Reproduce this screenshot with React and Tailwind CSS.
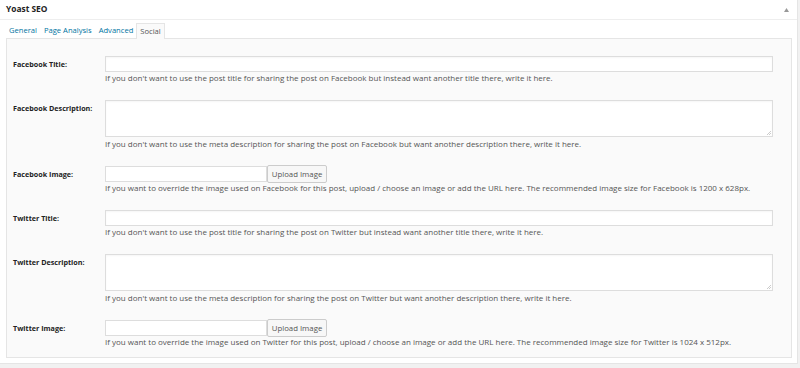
import React from "react";

const font = { fontFamily: "'Open Sans', 'Liberation Sans', sans-serif" };

function Field({ label, help, kind }) {
  return (
    <div className="flex mb-[16px] last:mb-0">
      <div className="w-[92px] shrink-0 text-[7.2px] font-bold leading-[16px] text-[#222]">{label}</div>
      <div className="flex-1">
        {kind === "text" && (
          <div className="h-[16px] w-[668px] border border-[#ddd] bg-white shadow-[inset_0_1px_2px_rgba(0,0,0,0.04)]"></div>
        )}
        {kind === "area" && (
          <div className="relative h-[37px] w-[668px] border border-[#ddd] bg-white shadow-[inset_0_1px_2px_rgba(0,0,0,0.04)]">
            <svg className="absolute right-[1px] bottom-[1px]" width="5" height="5" viewBox="0 0 5 5">
              <path d="M1 5 L5 1 M3 5 L5 3" stroke="#aaa" strokeWidth="0.6" />
            </svg>
          </div>
        )}
        {kind === "image" && (
          <div className="flex h-[16px]">
            <div className="h-[16px] w-[162px] border border-[#ddd] bg-white"></div>
            <button className="-mt-[1px] h-[18px] w-[60px] rounded-[2px] border border-[#ccc] bg-[#f7f7f7] text-[7.8px] leading-[16px] text-[#555]">
              Upload Image
            </button>
          </div>
        )}
        <div className={`text-[8px] leading-[12px] text-[#555] ${kind === "area" ? "mt-[1px]" : ""}`}>{help}</div>
      </div>
    </div>
  );
}

export default function App() {
  const fields = [
    { label: "Facebook Title:", kind: "text", help: "If you don't want to use the post title for sharing the post on Facebook but instead want another title there, write it here." },
    { label: "Facebook Description:", kind: "area", help: "If you don't want to use the meta description for sharing the post on Facebook but want another description there, write it here." },
    { label: "Facebook Image:", kind: "image", help: "If you want to override the image used on Facebook for this post, upload / choose an image or add the URL here. The recommended image size for Facebook is 1200 x 628px." },
    { label: "Twitter Title:", kind: "text", help: "If you don't want to use the post title for sharing the post on Twitter but instead want another title there, write it here." },
    { label: "Twitter Description:", kind: "area", help: "If you don't want to use the meta description for sharing the post on Twitter but want another description there, write it here." },
    { label: "Twitter Image:", kind: "image", help: "If you want to override the image used on Twitter for this post, upload / choose an image or add the URL here. The recommended image size for Twitter is 1024 x 512px." },
  ];

  return (
    <div className="h-[368px] w-[800px] bg-[#f1f1f1]" style={font}>
      <div className="w-[798px] border-r border-b border-[#e5e5e5] bg-white pb-[5px]">
        <div className="flex h-[20px] items-center justify-between border-b border-[#eee] pl-[6px] pr-[8px]">
          <span className="text-[8.4px] font-bold text-[#222]">Yoast SEO</span>
          <svg width="5" height="4" viewBox="0 0 5 4">
            <path d="M0 4 L2.5 0 L5 4 Z" fill="#999" />
          </svg>
        </div>
        <div className="mt-[3px] flex h-[15px] items-end pl-[9px] text-[7.6px] text-[#0074a2]">
          <span className="mr-[7px] leading-[16px]">General</span>
          <span className="mr-[7px] leading-[16px]">Page Analysis</span>
          <span className="mr-[3px] leading-[16px]">Advanced</span>
          <span className="relative -mb-[1px] h-[16px] border border-b-0 border-[#e5e5e5] bg-[#fafafa] px-[3px] leading-[15px] text-[#555]">Social</span>
        </div>
        <div className="ml-[6px] w-[786px] border border-[#e5e5e5] bg-[#fafafa] pl-[6px] pt-[17px] pb-[9px]">
          {fields.map((f) => (
            <Field key={f.label} {...f} />
          ))}
        </div>
      </div>
    </div>
  );
}
